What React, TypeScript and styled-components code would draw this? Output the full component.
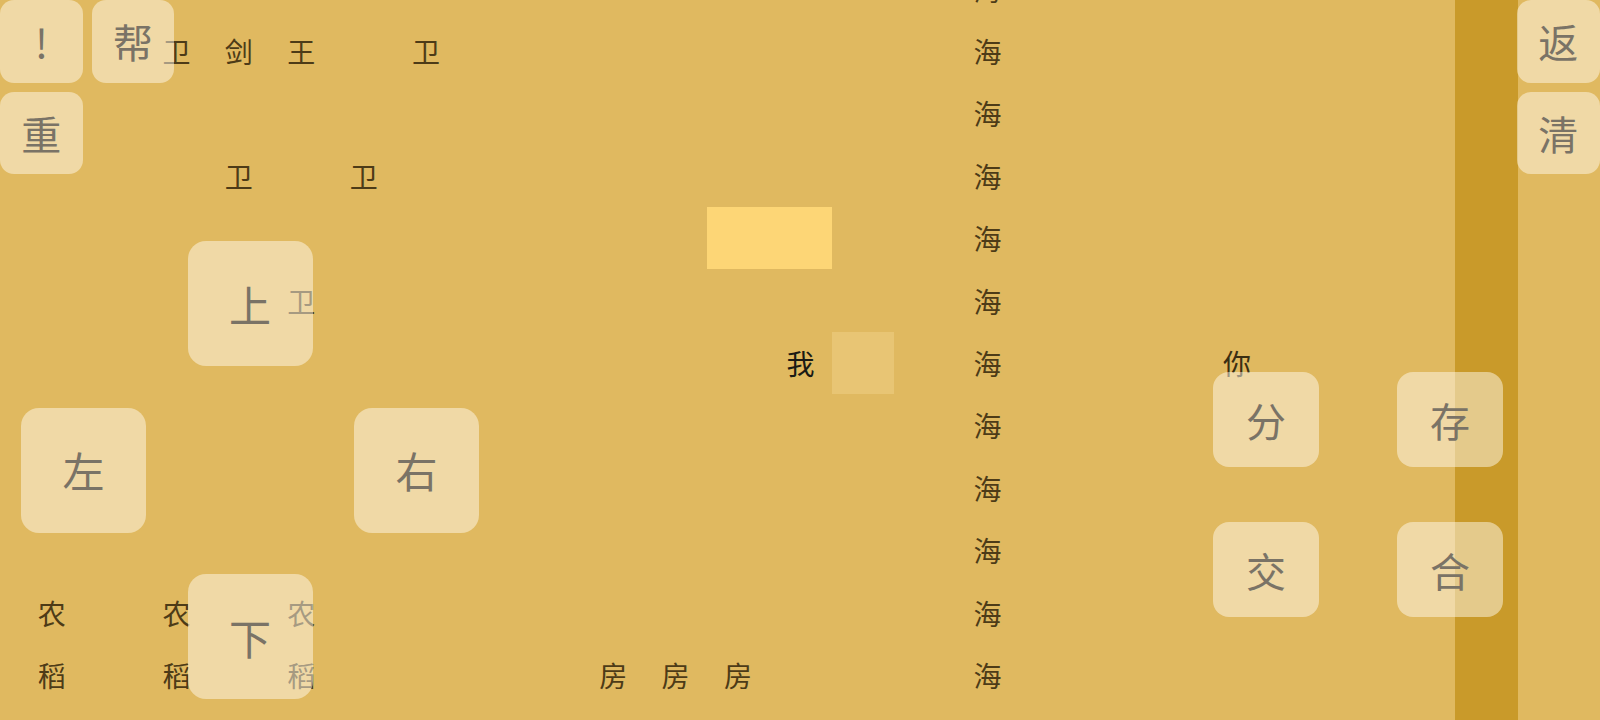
import React from "react";
import styled, { createGlobalStyle } from "styled-components";

// map geometry: one cell is 62.4px, map column -1 / row -1 are the first grid tracks
const CELL = 62.4;
const COLS = 26;
const ROWS = 13;

const GlobalStyles = createGlobalStyle`
  html, body {
    margin: 0;
    height: 100%;
    overflow: hidden;
    background: #e0b960;
  }
  body {
    font-family: "Noto Sans CJK SC", "Noto Sans", sans-serif;
  }
`;

const Screen = styled.div`
  position: relative;
  width: 1600px;
  height: 720px;
  overflow: hidden;
  background: #e0b960;
`;

const MapGrid = styled.div`
  display: grid;
  grid-template-columns: repeat(${COLS}, ${CELL}px);
  grid-template-rows: repeat(${ROWS}, ${CELL}px);
  margin-left: ${20.5 - CELL}px;
  margin-top: ${19.8 - CELL}px;
`;

const Wall = styled.div<{ $col: number }>`
  grid-column: ${(p) => p.$col + 2};
  grid-row: 1 / -1;
  background: #c99a2a;
`;

type Tone = "plain" | "me" | "other";

const Tile = styled.div<{ $col: number; $row: number; $tone?: Tone }>`
  grid-column: ${(p) => p.$col + 2};
  grid-row: ${(p) => p.$row + 2};
  display: flex;
  align-items: center;
  justify-content: center;
  font-size: 28px;
  line-height: 1;
  color: ${(p) =>
    p.$tone === "me" ? "#1b1a14" : p.$tone === "other" ? "#3a2e12" : "#4d3b17"};
`;

const Mark = styled.div<{ $col: number; $row: number; $span?: number; $bright?: boolean }>`
  grid-column: ${(p) => p.$col + 2} / span ${(p) => p.$span ?? 1};
  grid-row: ${(p) => p.$row + 2};
  background: ${(p) => (p.$bright ? "#fdd676" : "#e8c574")};
`;

const Hud = styled.div`
  position: absolute;
  inset: 0;
`;

const TopPad = styled.div<{ $right?: boolean }>`
  position: absolute;
  top: 0;
  ${(p) => (p.$right ? "right: 0.5px;" : "left: 0;")}
  display: grid;
  grid-template-columns: repeat(${(p) => (p.$right ? 1 : 2)}, 82.7px);
  grid-auto-rows: 82.7px;
  gap: 9px;
`;

const DPad = styled.div`
  position: absolute;
  left: 21px;
  top: 241px;
  display: grid;
  grid-template-columns: repeat(3, 125px);
  grid-template-rows: repeat(3, 125px);
  gap: 41.5px;
  grid-template-areas:
    ". up ."
    "left . right"
    ". down .";
`;

const ActionPad = styled.div`
  position: absolute;
  left: 1213px;
  top: 372px;
  display: grid;
  grid-template-columns: repeat(2, 106px);
  grid-template-rows: repeat(2, 95px);
  column-gap: 78px;
  row-gap: 55px;
`;

const Key = styled.button<{ $area?: string; $round?: number; $big?: boolean }>`
  ${(p) => (p.$area ? `grid-area: ${p.$area};` : "")}
  display: flex;
  align-items: center;
  justify-content: center;
  padding: 0;
  border: none;
  border-radius: ${(p) => p.$round ?? 14}px;
  background: rgba(255, 250, 235, 0.5);
  color: #7a7366;
  font-family: "Noto Sans CJK SC", "Noto Sans", sans-serif;
  font-size: ${(p) => (p.$big ? 42 : 40)}px;
  line-height: 1;
`;

const SEA_ROWS = [-1, 0, 1, 2, 3, 4, 5, 6, 7, 8, 9, 10];

const tiles: { c: number; r: number; t: string; tone?: Tone }[] = [
  { c: 2, r: 0, t: "卫" },
  { c: 3, r: 0, t: "剑" },
  { c: 4, r: 0, t: "王" },
  { c: 6, r: 0, t: "卫" },
  { c: 3, r: 2, t: "卫" },
  { c: 5, r: 2, t: "卫" },
  { c: 4, r: 4, t: "卫" },
  { c: 12, r: 5, t: "我", tone: "me" },
  { c: 19, r: 5, t: "你", tone: "other" },
  { c: 0, r: 9, t: "农" },
  { c: 2, r: 9, t: "农" },
  { c: 4, r: 9, t: "农" },
  { c: 0, r: 10, t: "稻" },
  { c: 2, r: 10, t: "稻" },
  { c: 4, r: 10, t: "稻" },
  { c: 9, r: 10, t: "房" },
  { c: 10, r: 10, t: "房" },
  { c: 11, r: 10, t: "房" },
  ...SEA_ROWS.map((r) => ({ c: 15, r, t: "海" })),
];

export default function App() {
  return (
    <>
      <GlobalStyles />
      <Screen>
        <MapGrid>
          <Wall $col={23} />
          <Mark $col={11} $row={3} $span={2} $bright />
          <Mark $col={13} $row={5} />
          {tiles.map((tile, i) => (
            <Tile key={i} $col={tile.c} $row={tile.r} $tone={tile.tone}>
              {tile.t}
            </Tile>
          ))}
        </MapGrid>

        <Hud>
          <TopPad>
            <Key>!</Key>
            <Key>帮</Key>
            <Key>重</Key>
          </TopPad>
          <TopPad $right>
            <Key>返</Key>
            <Key>清</Key>
          </TopPad>
          <DPad>
            <Key $area="up" $round={18} $big>上</Key>
            <Key $area="left" $round={18} $big>左</Key>
            <Key $area="right" $round={18} $big>右</Key>
            <Key $area="down" $round={18} $big>下</Key>
          </DPad>
          <ActionPad>
            <Key $round={16}>分</Key>
            <Key $round={16}>存</Key>
            <Key $round={16}>交</Key>
            <Key $round={16}>合</Key>
          </ActionPad>
        </Hud>
      </Screen>
    </>
  );
}
